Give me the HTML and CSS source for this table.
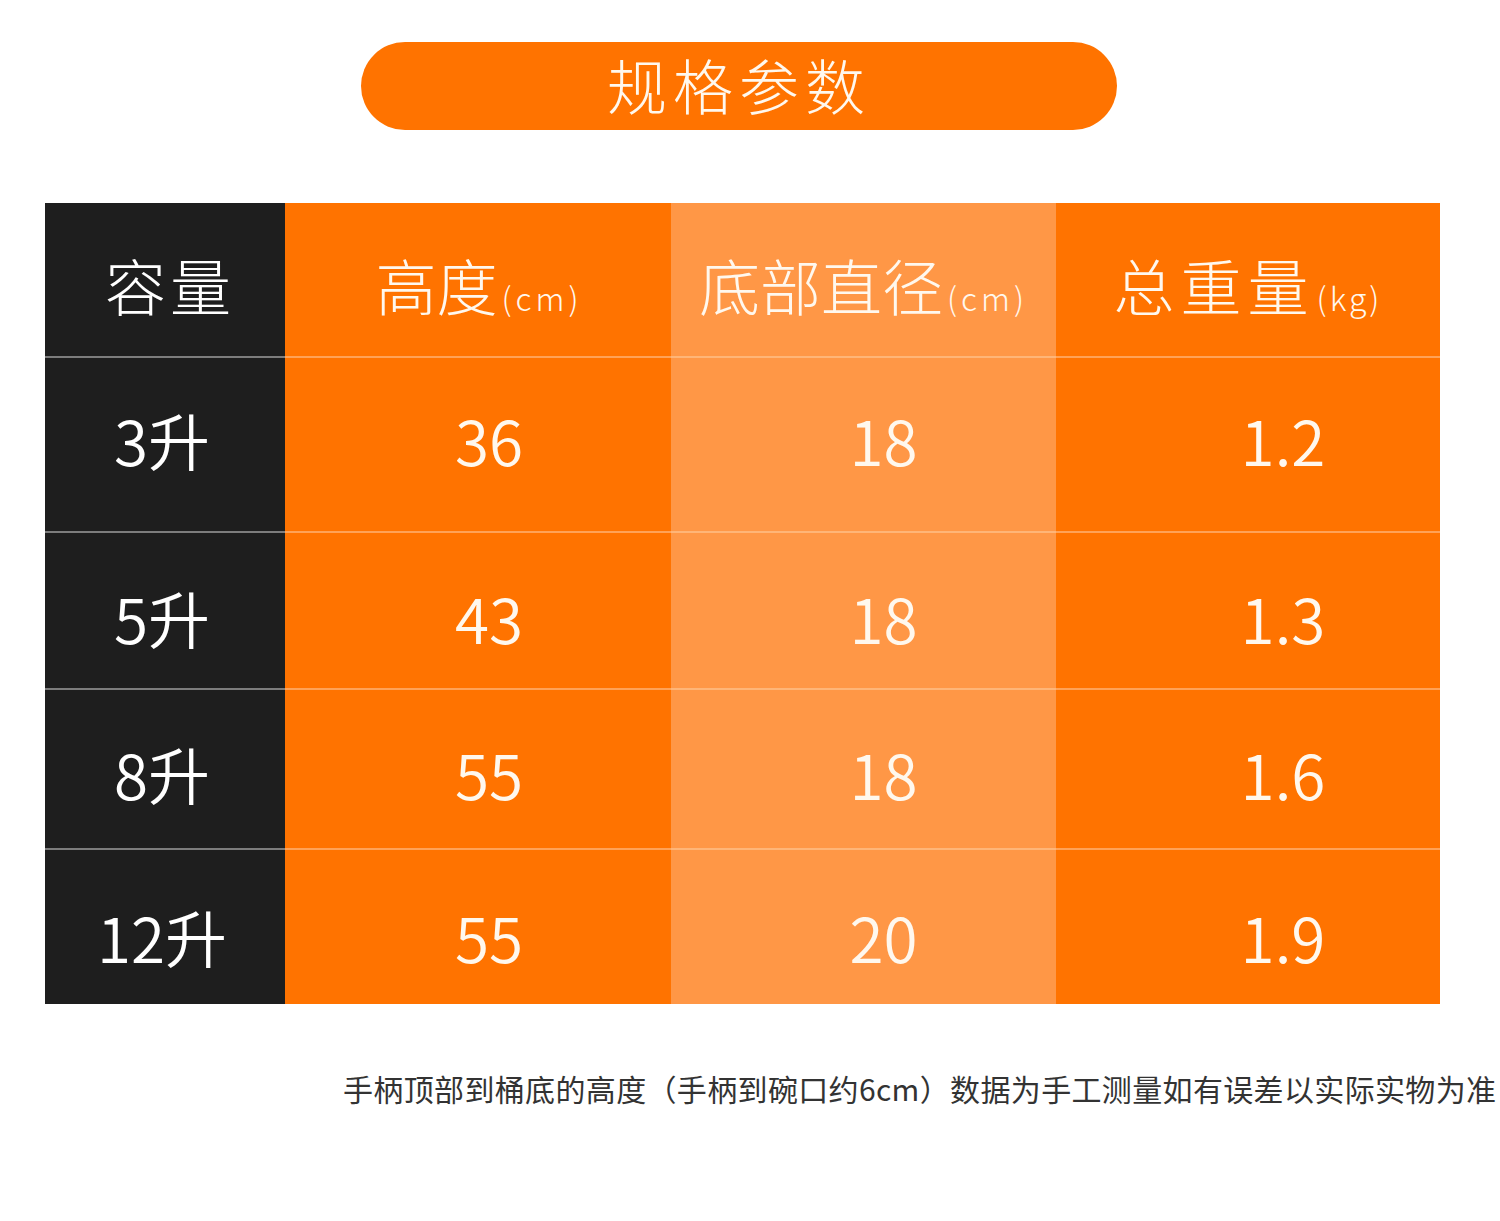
FILE: index.html
```html
<!DOCTYPE html>
<html lang="zh-CN">
<head>
<meta charset="utf-8">
<title>规格参数</title>
<link rel="stylesheet" href="styles.css">
</head>
<body>
<div class="page">
  <div class="pill">规格参数</div>
  <div class="spec">
    <div class="cell c1 r0"><span>容量</span></div>
    <div class="cell c2 r0"><span>高度<span class="unit">(cm)</span></span></div>
    <div class="cell c3 r0"><span>底部直径<span class="unit">(cm)</span></span></div>
    <div class="cell c4 r0"><span><span class="wide">总重量</span><span class="unit">(kg)</span></span></div>

    <div class="cell c1 r1 row">3升</div>
    <div class="cell c2 r1 row num">36</div>
    <div class="cell c3 r1 row num">18</div>
    <div class="cell c4 r1 row num">1.2</div>

    <div class="cell c1 r2 row">5升</div>
    <div class="cell c2 r2 row num">43</div>
    <div class="cell c3 r2 row num">18</div>
    <div class="cell c4 r2 row num">1.3</div>

    <div class="cell c1 r3 row">8升</div>
    <div class="cell c2 r3 row num">55</div>
    <div class="cell c3 r3 row num">18</div>
    <div class="cell c4 r3 row num">1.6</div>

    <div class="cell c1 r4 row">12升</div>
    <div class="cell c2 r4 row num">55</div>
    <div class="cell c3 r4 row num">20</div>
    <div class="cell c4 r4 row num">1.9</div>
  </div>
  <p class="note">手柄顶部到桶底的高度（手柄到碗口约6cm）数据为手工测量如有误差以实际实物为准</p>
</div>
</body>
</html>
```

FILE: styles.css
```css
html, body {
  margin: 0;
  padding: 0;
  background: #ffffff;
}

body {
  font-family: "Noto Sans CJK SC", "Noto Sans", sans-serif;
}

.page {
  width: 1500px;
  padding-top: 42px;
}

.pill {
  margin-left: 361px;
  width: 756px;
  height: 88px;
  border-radius: 44px;
  background: #ff7300;
  color: #fff8ee;
  display: flex;
  align-items: center;
  justify-content: center;
  font-size: 60px;
  font-weight: 300;
  letter-spacing: 6px;
  padding-bottom: 4px;
  box-sizing: border-box;
  line-height: 1;
}

.spec {
  margin-top: 73px;
  margin-left: 45px;
  display: grid;
  grid-template-columns: 240px 386px 385px 384px;
  grid-template-rows: 153px 175px 157px 160px 156px;
  width: 1395px;
}

.cell {
  display: flex;
  align-items: center;
  justify-content: center;
  box-sizing: border-box;
  color: #fff8ee;
  font-weight: 300;
  line-height: 1;
  white-space: nowrap;
}

.c1 { background: #1e1e1e; color: #ffffff; padding-right: 6px; }
.c2 { background: #ff7300; }
.c3 { background: #ff9746; }
.c4 { background: #ff7300; }

.row { border-top: 2px solid #ffa257; }
.c1.row { border-top-color: #7d7d7d; }
.c3.row { border-top-color: #ffb577; }

.r0 { font-size: 61px; padding-top: 10px; }
.r0.c1 { letter-spacing: 4px; padding-right: 0; padding-left: 10px; }
.r0.c2 { padding-left: 2px; }
.r1 { padding-bottom: 12px; }
.r2 { padding-top: 12px; }
.r3 { padding-top: 8px; }
.r4 { padding-top: 18px; }

.row { font-size: 62px; font-weight: 350; }

.num.c2 { padding-left: 22px; }
.num.c3 { padding-left: 40px; }
.num.c4 { padding-left: 70px; }

.wide { letter-spacing: 6px; }

.unit {
  font-size: 32px;
  letter-spacing: 4px;
  margin-left: 4px;
}

.c4 .unit { letter-spacing: 3px; margin-left: 2px; }

.note {
  margin: 66px 0 0 343px;
  font-size: 30px;
  letter-spacing: 0.35px;
  color: #333333;
  white-space: nowrap;
  line-height: 1.2;
}
```
